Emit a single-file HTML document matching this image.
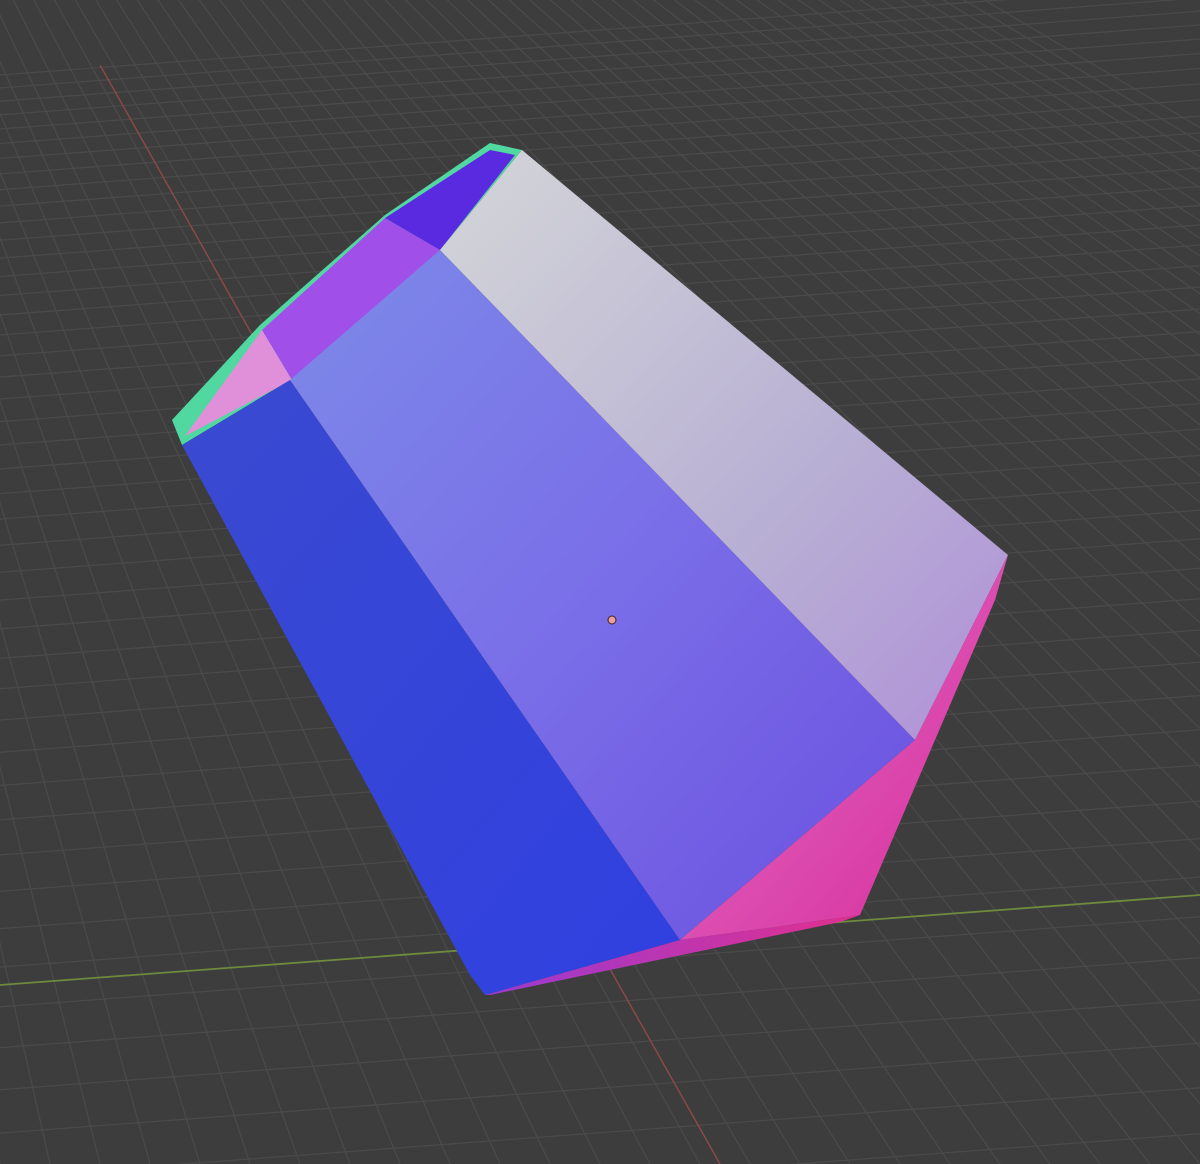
<!DOCTYPE html>
<html><head><meta charset="utf-8"><style>
html,body{margin:0;padding:0;background:#3d3d3d;overflow:hidden;width:1200px;height:1164px;}
svg{display:block}
</style></head><body>
<svg id="s" width="1200" height="1164" viewBox="0 0 1200 1164" xmlns="http://www.w3.org/2000/svg">
<defs>
<linearGradient id="gL" x1="0" y1="0" x2="1" y2="1"><stop offset="0" stop-color="#3a4ad0"/><stop offset="1" stop-color="#3040e0"/></linearGradient>
<linearGradient id="gM" x1="0" y1="0" x2="1" y2="1"><stop offset="0" stop-color="#7c8ae8"/><stop offset="0.5" stop-color="#7a6ee8"/><stop offset="1" stop-color="#6a50e0"/></linearGradient>
<linearGradient id="gR" x1="0" y1="0" x2="1" y2="1"><stop offset="0" stop-color="#d4d6d8"/><stop offset="0.6" stop-color="#b8b0d4"/><stop offset="1" stop-color="#b090d8"/></linearGradient>
<linearGradient id="gP" x1="0" y1="0" x2="1" y2="1"><stop offset="0" stop-color="#e070c8"/><stop offset="1" stop-color="#d82c9a"/></linearGradient>
<linearGradient id="gB" x1="0" y1="0" x2="1" y2="0"><stop offset="0" stop-color="#9a3ad0"/><stop offset="1" stop-color="#e0308f"/></linearGradient>
</defs>
<g id="grid" stroke="#4a4a4a" stroke-width="1.3" fill="none"></g>
<line x1="100" y1="65" x2="720" y2="1164" stroke="#8a4848" stroke-width="1.5"/>
<line x1="0" y1="985" x2="1200" y2="895" stroke="#6e8a3c" stroke-width="1.8"/>
<polygon points="172,420 260,325 385,215 490,143 522,150 440,250 290,380 182,445" fill="#50d8a0"/>
<polygon points="185,436 262,330 292,380" fill="#e090d8"/>
<polygon points="262,330 385,218 440,250 292,380" fill="#a050e8"/>
<polygon points="385,218 490,150 515,155 440,250" fill="#5a2ae0"/>
<polygon points="182,445 290,380 680,940 485,995 470,975" fill="url(#gL)"/>
<polygon points="290,380 440,250 915,740 680,940" fill="url(#gM)"/>
<polygon points="440,250 522,150 1008,555 915,740" fill="url(#gR)"/>
<polygon points="915,740 1008,555 995,600 860,915 680,940" fill="url(#gP)"/>
<polygon points="680,940 860,915 840,922 490,995 485,995" fill="url(#gB)"/>
<circle cx="612" cy="620" r="4" fill="#e8a0a0" stroke="#402020" stroke-width="1"/>
</svg>
<script>
(function(){
var g=document.getElementById('grid'),h='';
var y=30;
while(y<1200){h+='<line x1="0" y1="'+(y+45)+'" x2="1200" y2="'+(y-45)+'"/>';y+=12+0.03*y;}
var vx=-400,vy=-820;
for(var x=-1200;x<3000;x+=50){h+='<line x1="'+vx+'" y1="'+vy+'" x2="'+x+'" y2="1164"/>';}
g.innerHTML=h;
})();
</script>
</body></html>
